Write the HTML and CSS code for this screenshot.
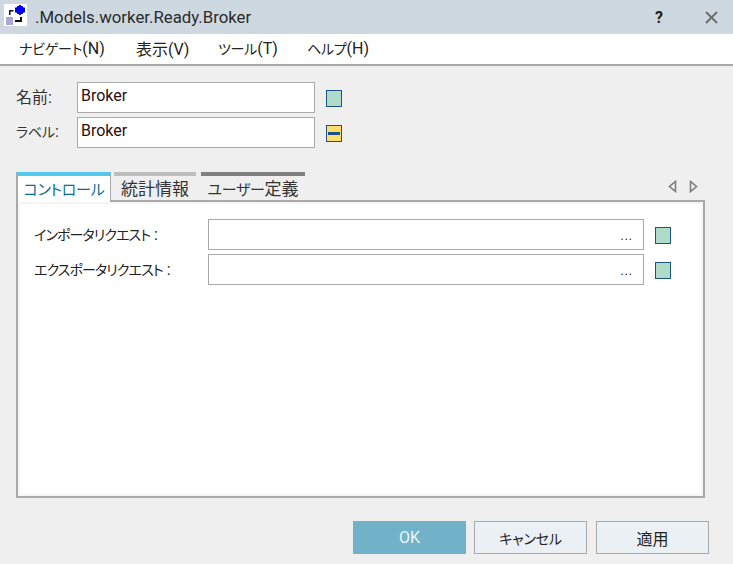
FILE: index.html
```html
<!DOCTYPE html>
<html lang="ja">
<head>
<meta charset="utf-8">
<title>.Models.worker.Ready.Broker</title>
<link rel="stylesheet" href="styles.css">
</head>
<body>
<div class="window">
  <header class="titlebar">
    <svg class="app-icon" width="23" height="22" viewBox="0 0 23 22">
      <rect width="23" height="22" fill="#fff"/>
      <path d="M5 6h4.500v1.500h-3V11H5z" fill="#111"/>
      <rect x="2" y="13" width="7" height="8" fill="#aaa8d8"/>
      <path d="M11 16h5v-3h2v5h-7z" fill="#111"/>
      <path d="M15 1h2v1h1.500l1 1.500H21v5h-1.500l-1 1.500H17v1h-2v-1h-1.500l-1-1.500H11v-5h1.500l1-1.500H15z" fill="#0000f0"/>
    </svg>
    <span class="title">.Models.worker.Ready.Broker</span>
    <span class="help">?</span>
    <svg class="close" width="13" height="13" viewBox="0 0 13 13"><path d="M1 1l11 11M12 1L1 12" stroke="#6f6f6f" stroke-width="2" fill="none"/></svg>
  </header>
  <nav class="menubar">
    <span class="menu-nav"><span class="kana">ナビゲート</span>(N)</span>
    <span class="menu-view">表示(V)</span>
    <span class="menu-tool"><span class="kana">ツール</span>(T)</span>
    <span><span class="kana">ヘルプ</span>(H)</span>
  </nav>
  <main class="content">
    <div class="form-row">
      <label class="form-label">名前:</label>
      <div class="input">Broker</div>
      <span class="mark"></span>
    </div>
    <div class="form-row">
      <label class="form-label"><span class="kana">ラベル</span>:</label>
      <div class="input">Broker</div>
      <span class="mark mark-yellow"><i class="dash"></i></span>
    </div>
    <div class="tabs">
      <div class="tab tab-active"><span class="kana kana-tab">コントロール</span></div>
      <div class="tab tab-stats">統計情報</div>
      <div class="tab tab-user"><span class="kana kana-tab">ユーザー</span>定義</div>
      <div class="tab-arrows">
        <svg width="9" height="13" viewBox="0 0 9 13"><path d="M7.500 1.500v10L1.500 6.500z" fill="none" stroke="#7d7d7d" stroke-width="1.600"/></svg>
        <svg width="9" height="13" viewBox="0 0 9 13"><path d="M1.500 1.500v10l6-5z" fill="none" stroke="#7d7d7d" stroke-width="1.600"/></svg>
      </div>
    </div>
    <section class="panel">
      <div class="panel-row">
        <label class="panel-label"><span class="kana kana-panel">インポータリクエスト</span> :</label>
        <div class="picker">...</div>
        <span class="mark"></span>
      </div>
      <div class="panel-row">
        <label class="panel-label"><span class="kana kana-panel">エクスポータリクエスト</span> :</label>
        <div class="picker">...</div>
        <span class="mark"></span>
      </div>
    </section>
    <footer class="actions">
      <button class="btn btn-primary">OK</button>
      <button class="btn"><span class="kana">キャンセル</span></button>
      <button class="btn btn-apply">適用</button>
    </footer>
  </main>
</div>
</body>
</html>
```
FILE: styles.css
```css
* { box-sizing: border-box; }
html, body { margin: 0; padding: 0; }
body {
  width: 733px;
  height: 564px;
  overflow: hidden;
  background: #efefef;
  color: #222;
  font-family: Roboto, "Noto Sans CJK JP", sans-serif;
  font-size: 16px;
  font-feature-settings: "palt";
  white-space: nowrap;
}
.kana { font-size: 14px; letter-spacing: -0.200px; }
.kana-tab { font-size: 15px; letter-spacing: -0.300px; }
.kana-panel { letter-spacing: -0.900px; }
.window { display: flex; flex-direction: column; height: 564px; }
.titlebar {
  height: 34px;
  flex: none;
  background: #cdd8e0;
  display: flex;
  align-items: center;
  padding-left: 4px;
}
.app-icon { flex: none; margin-top: -4px; }
.title { margin-left: 8px; font-size: 16.800px; color: #2b2b2b; flex: 1; padding-bottom: 1px; }
.help { font-weight: 700; font-size: 16px; color: #222; margin-right: 42px; }
.close { margin-right: 15px; }
.menubar {
  height: 32px;
  flex: none;
  background: #fff;
  border-bottom: 2px solid #a8a8a8;
  display: flex;
  align-items: center;
  padding-left: 19px;
  padding-bottom: 2px;
  color: #222;
}
.menu-nav { width: 117px; }
.menu-view { width: 82px; }
.menu-tool { width: 89px; }
.content { flex: 1; padding: 16px 24px 0 16px; display: flex; flex-direction: column; }
.form-row { display: flex; align-items: center; height: 31px; margin-bottom: 4px; }
.form-label { width: 61px; color: #333; padding-bottom: 3px; }
.input {
  width: 238px;
  height: 31px;
  background: #fff;
  border: 1px solid #a9a9a9;
  padding: 0 3px;
  line-height: 25px;
  color: #2a1010;
}
.mark {
  width: 16px;
  height: 17px;
  margin-left: 11px;
  margin-top: 2px;
  flex: none;
  background: #aedcc9;
  border: 1px solid #1d5384;
  display: flex;
  align-items: center;
  justify-content: center;
}
.mark-yellow { background: #ffdc6e; }
.dash { width: 12px; height: 3px; background: #1d5384; display: block; }
.tabs { display: flex; align-items: flex-start; height: 30px; margin-top: 20px; position: relative; z-index: 1; }
.tab {
  height: 28px;
  border-top: 4px solid #bdbdbd;
  font-size: 17px;
  line-height: 27px;
  color: #333;
  text-align: center;
}
.tab-active {
  width: 95px;
  height: 30px;
  border: 2px solid #a9a9a9;
  border-top: 4px solid #55c8ee;
  border-bottom: 0;
  border-right-width: 1px;
  background: #fff;
  color: #0b6f93;
}
.tab-stats { width: 82px; margin-left: 3px; }
.tab-user { width: 104px; margin-left: 5px; border-top-color: #808080; }
.tab-arrows { margin-left: auto; margin-right: 11px; margin-top: 8px; display: flex; gap: 12px; }
.panel {
  height: 298px;
  margin-top: -2px;
  background: #fff;
  border: 2px solid #a9a9a9;
  box-shadow: inset 0 0 0 2px #f5f5f5;
  padding: 17px 0 0 16px;
  width: 689px;
  display: flex;
  flex-direction: column;
  gap: 4px;
}
.panel-row { display: flex; align-items: center; height: 31px; }
.panel-label { width: 174px; color: #222; padding-bottom: 1px; }
.picker {
  width: 436px;
  height: 31px;
  border: 1px solid #a9a9a9;
  background: #fff;
  text-align: right;
  padding-right: 10px;
  line-height: 32px;
  font-size: 12px;
  letter-spacing: 1px;
  color: #111;
}
.actions { display: flex; gap: 8px; margin-top: 23px; margin-left: 337px; width: 356px; }
.btn {
  width: 113px;
  height: 33px;
  padding: 0;
  background: #ebf0f4;
  border: 1px solid #a9a9a9;
  font-family: inherit;
  font-size: 16px;
  font-feature-settings: inherit;
  color: #222;
}
.btn-apply { margin-left: 1px; }
.btn-primary { background: #72b2c8; border-color: #72b2c8; color: #ecf7fb; }
```
